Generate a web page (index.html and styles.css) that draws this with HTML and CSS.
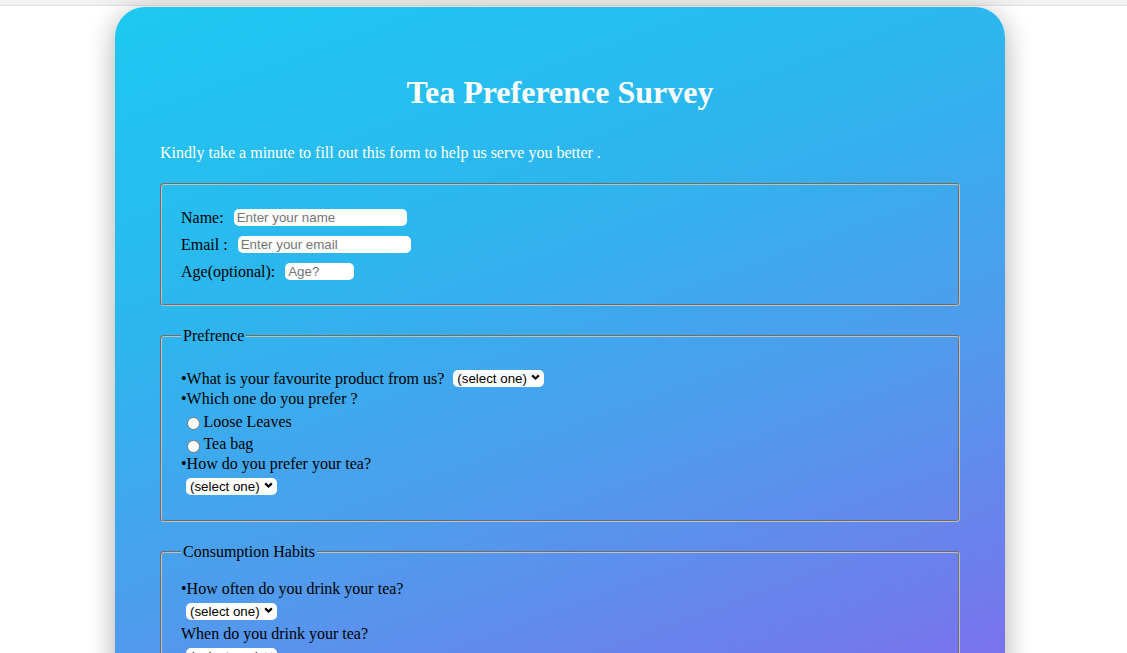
FILE: index.html
```html
<!DOCTYPE html>
<html lang="en">
<head>
<meta charset="utf-8">
<title>Tea Preference Survey</title>
<link rel="stylesheet" href="styles.css">
</head>
<body>
<div class="topbar"></div>
<main class="card">
  <h1 class="title">Tea Preference Survey</h1>
  <p class="intro">Kindly take a minute to fill out this form to help us serve you better .</p>
  <form class="survey">
    <fieldset class="group group-personal">
      <div class="row"><label for="name">Name:</label><input id="name" class="field field-name" type="text" placeholder="Enter your name"></div>
      <div class="row"><label for="email">Email :</label><input id="email" class="field field-email" type="text" placeholder="Enter your email"></div>
      <div class="row"><label for="age">Age(optional):</label><input id="age" class="field field-age" type="text" placeholder="Age?"></div>
    </fieldset>

    <fieldset class="group group-pref">
      <legend class="legend">Prefrence</legend>
      <div class="row row-p1"><label for="product">•What is your favourite product from us?</label>
        <span class="select-wrap select-inline"><select id="product" class="select"><option>(select one)</option><option>Green</option><option>Black</option></select><svg class="chevron" viewBox="0 0 10 6"><path d="M1.3 1.2 5 4.7 8.7 1.2"/></svg></span>
      </div>
      <div class="row row-p2">•Which one do you prefer ?</div>
      <label class="row row-p3"><input class="radio" type="radio" name="kind">Loose Leaves</label>
      <label class="row row-p4"><input class="radio" type="radio" name="kind">Tea bag</label>
      <div class="row row-p5"><label for="style">•How do you prefer your tea?</label></div>
      <div class="row row-p6">
        <span class="select-wrap"><select id="style" class="select"><option>(select one)</option><option>Hot</option><option>Iced</option></select><svg class="chevron" viewBox="0 0 10 6"><path d="M1.3 1.2 5 4.7 8.7 1.2"/></svg></span>
      </div>
    </fieldset>

    <fieldset class="group group-habits">
      <legend class="legend">Consumption Habits</legend>
      <div class="row"><label for="often">•How often do you drink your tea?</label></div>
      <div class="row">
        <span class="select-wrap"><select id="often" class="select"><option>(select one)</option><option>Daily</option><option>Weekly</option></select><svg class="chevron" viewBox="0 0 10 6"><path d="M1.3 1.2 5 4.7 8.7 1.2"/></svg></span>
      </div>
      <div class="row"><label for="when">When do you drink your tea?</label></div>
      <div class="row">
        <span class="select-wrap"><select id="when" class="select"><option>(select one)</option><option>Morning</option><option>Evening</option></select><svg class="chevron" viewBox="0 0 10 6"><path d="M1.3 1.2 5 4.7 8.7 1.2"/></svg></span>
      </div>
      <div class="row">•What do you add to your tea?</div>
      <label class="row"><input class="radio check" type="checkbox">Milk</label>
      <label class="row"><input class="radio check" type="checkbox">Sugar</label>
      <label class="row"><input class="radio check" type="checkbox">Honey</label>
    </fieldset>

    <fieldset class="group group-extra">
      <legend class="legend">Comments</legend>
      <div class="row">Any comments or suggestions?</div>
      <textarea class="comments" rows="4"></textarea>
    </fieldset>

    <div class="actions"><button class="submit" type="submit">Submit</button></div>
  </form>
</main>
</body>
</html>
```
FILE: styles.css
```css
html, body {
  margin: 0;
  padding: 0;
  background: #fff;
}

body {
  font-family: "Liberation Serif", "Times New Roman", serif;
  font-size: 16px;
  color: #000;
}

.topbar {
  height: 5px;
  background: #f1f1f1;
  border-bottom: 1px solid #e2e2e2;
}

.card {
  width: 890px;
  box-sizing: border-box;
  margin: 1px 0 40px 115px;
  padding: 46px 45px 40px;
  border-radius: 30px;
  background: linear-gradient(160deg, #1cc9f1 0px, #2db6ee 320px, #509bed 600px, #7874ed 900px, #9664ee 1300px);
  box-shadow: 0 6px 28px rgba(0, 0, 0, 0.32);
}

.title {
  margin: 21.1px 0 33px;
  font-size: 32px;
  font-weight: bold;
  text-align: center;
  color: #fff;
}

.intro {
  margin: 0 0 21px;
  color: #fff;
}

.group {
  margin: 0 0 21px;
  padding: 17px 19px 19px;
  border: 2px groove #c0c0c0;
  border-radius: 4px;
  min-width: 0;
}

.group-personal {
  padding-top: 19px;
}

.legend {
  padding: 0 2px;
}

.row {
  display: flex;
  align-items: center;
  height: 22.5px;
  white-space: nowrap;
}

.group-personal .row {
  height: 27px;
}

.group-pref .row-p1 {
  margin-top: 5.8px;
  height: 21.6px;
}

.group-pref .row-p2 {
  height: 20px;
}

.group-pref .row-p3 {
  height: 24.6px;
}

.group-pref .row-p4 {
  height: 20.8px;
}

.group-pref .row-p5 {
  height: 17.8px;
}

.group-pref .row-p6 {
  height: 28.2px;
}

.field {
  box-sizing: border-box;
  height: 17px;
  margin: 0 0 0 10px;
  padding: 1px 3px;
  border: none;
  border-radius: 5px;
  background: #fff;
  font-family: "Liberation Sans", Arial, sans-serif;
  font-size: 13.33px;
  color: #000;
  outline: none;
}

.field::placeholder {
  color: #757575;
}

.field-name,
.field-email {
  width: 173px;
}

.field-age {
  width: 69px;
}

.select-wrap {
  position: relative;
  display: inline-flex;
  margin-left: 5px;
}

.select-inline {
  margin-left: 9px;
}

.select {
  appearance: none;
  -webkit-appearance: none;
  box-sizing: border-box;
  width: 91px;
  height: 17px;
  margin: 0;
  padding: 0 0 0 4px;
  border: none;
  border-radius: 5px;
  background: #fff;
  font-family: "Liberation Sans", Arial, sans-serif;
  font-size: 13.33px;
  color: #000;
}

.chevron {
  position: absolute;
  right: 4px;
  top: 4px;
  width: 9px;
  height: 6px;
  pointer-events: none;
  fill: none;
  stroke: #000;
  stroke-width: 2.4;
}

.radio {
  appearance: none;
  -webkit-appearance: none;
  box-sizing: border-box;
  flex: none;
  width: 13.4px;
  height: 13.4px;
  margin: 4px 3px 0 6px;
  border: 1px solid #767676;
  border-radius: 50%;
  background: #fff;
}

.check {
  border-radius: 2px;
}

.comments {
  width: 400px;
  margin-top: 6px;
  border: none;
  border-radius: 5px;
}

.actions {
  display: flex;
  justify-content: center;
}

.submit {
  padding: 6px 24px;
  border: none;
  border-radius: 6px;
  background: #fff;
  font-family: "Liberation Serif", serif;
  font-size: 16px;
}
```
